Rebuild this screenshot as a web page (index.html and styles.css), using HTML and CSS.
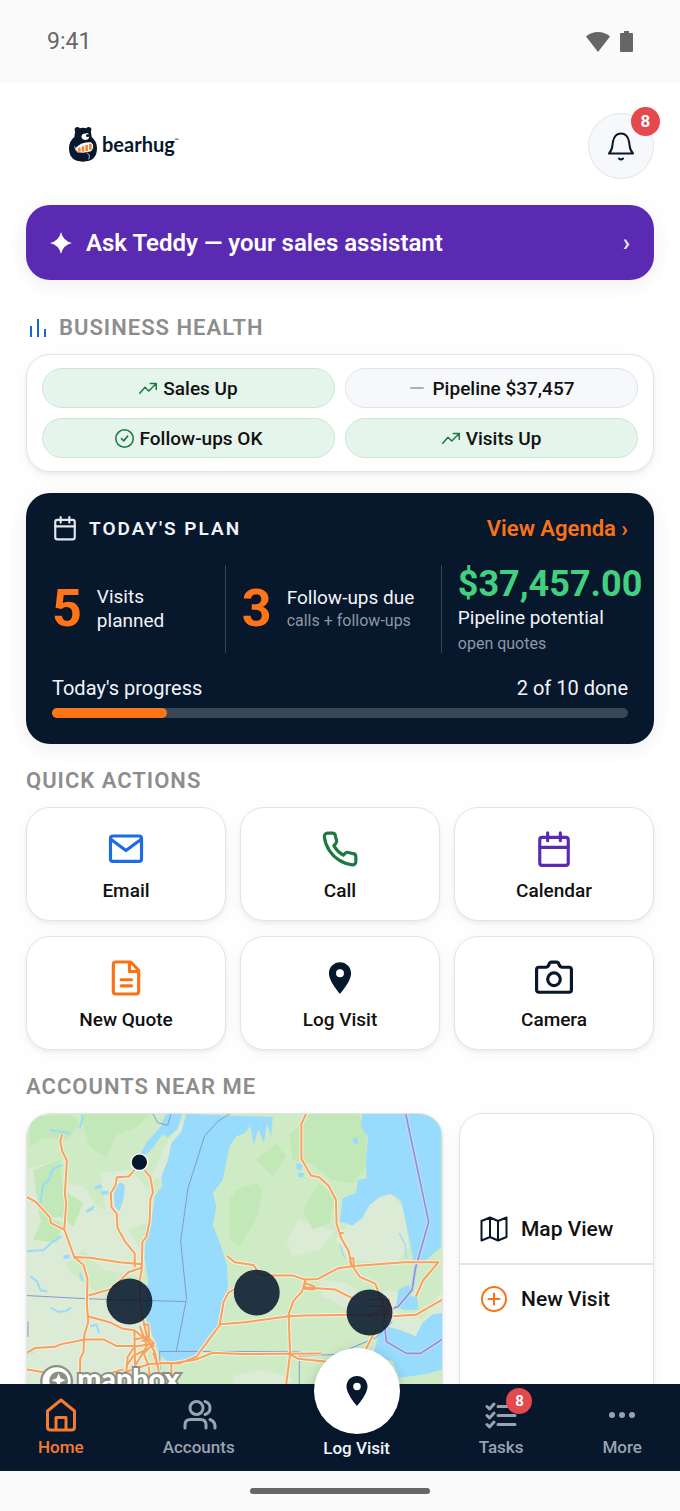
FILE: index.html
```html
<!DOCTYPE html>
<html lang="en">
<head>
    <meta charset="UTF-8">
    <meta name="viewport" content="width=device-width, initial-scale=1.0">
    <title>bearhug</title>
    <link rel="stylesheet" href="styles.css">
</head>
<body>
    <div class="app">
        <div class="status">
            <span>9:41</span>
            <div class="status_icons">
                <svg width="24" height="20" viewBox="0 0 24 20"><path d="M12 20 0 4.500Q5 0 12 0t12 4.500z"/></svg>
                <svg width="13" height="21" viewBox="0 0 13 21"><path d="M4 0h5v2h3q1 0 1 1v17q0 1-1 1H1q-1 0-1-1V3q0-1 1-1h3z"/></svg>
            </div>
        </div>

        <main>
            <header>
                <a class="logo" href="#">
                    <svg width="28" height="35" viewBox="0 0 84 105">
                        <circle cx="25" cy="8" r="8" fill="#07172c"/><circle cx="59" cy="8" r="8" fill="#07172c"/>
                        <path d="M21 8Q42-4 63 8q4 8 5 22 16 13 16 34 0 40-42 40T0 64q0-21 16-34 1-14 5-22z" fill="#07172c"/>
                        <path d="M37 28q3-10 12-8 9-5 11 5 3 12-10 14-12 0-13-11z" fill="#fff"/>
                        <ellipse cx="56" cy="26" rx="5" ry="4" fill="#07172c"/>
                        <path d="M19 64Q38 42 66 46l5 5q5 12-5 22-20 6-38 3-6-4-9-12z" fill="#fff"/>
                        <path d="M31 62v12M42 58v16M53 54v18M64 50v18" stroke="#f58634" stroke-width="8"/>
                        <path d="M17 58q0 12 12 20M54 78q11 5 5 19" fill="none" stroke="#b9c6d5" stroke-width="3"/>
                    </svg>
                    <span>bearhug<sup>™</sup></span>
                </a>
                <button class="bell" aria-label="Notifications">
                    <svg width="32" height="32" viewBox="0 0 32 32" class="line"><path d="M4 23.500h24c-4-4-3-7-4-12-1-5-4-8-8-8s-7 3-8 8c-1 5 0 8-4 12zM14 28.500q2 2 4 0"/></svg>
                    <span class="badge">8</span>
                </button>
            </header>

            <button class="ask">
                <svg width="22" height="22" viewBox="0 0 22 22"><path d="M11 0q2 9 11 11-9 2-11 11-2-9-11-11 9-2 11-11z" fill="#fff"/></svg>
                <span>Ask Teddy — your sales assistant</span>
                <span class="arrow">›</span>
            </button>

            <h2>
                <svg width="18" height="18" viewBox="0 0 18 18"><path d="M2 7v11M9 0v18M16 10v8" stroke="#1d63d8" stroke-width="2"/></svg>
                BUSINESS HEALTH
            </h2>
            <div class="card health">
                <div class="chip good"><svg width="18" height="18" viewBox="0 0 24 24" class="line"><path d="M1 19l7-8 5 5 9-9M15 6h8v8"/></svg>Sales Up</div>
                <div class="chip"><svg class="dash" width="18" height="18" viewBox="0 0 24 24"><path d="M3 12h18"/></svg>Pipeline $37,457</div>
                <div class="chip good"><svg width="19" height="19" viewBox="0 0 24 24" class="line"><circle cx="12" cy="12" r="11"/><path d="M8 12l3 3 5-6"/></svg>Follow-ups OK</div>
                <div class="chip good"><svg width="18" height="18" viewBox="0 0 24 24" class="line"><path d="M1 19l7-8 5 5 9-9M15 6h8v8"/></svg>Visits Up</div>
            </div>

            <section class="plan">
                <div class="plan_head">
                    <svg width="26" height="26" viewBox="0 0 24 24" class="line"><rect x="3" y="4.500" width="18" height="18" rx="2"/><path d="M3 10.500h18M8 2v5M16 2v5"/></svg>
                    <h3>TODAY'S PLAN</h3>
                    <a href="#">View Agenda ›</a>
                </div>
                <div class="stats">
                    <div class="stat"><b>5</b><p>Visits planned</p></div>
                    <div class="stat"><b>3</b><p>Follow-ups due<small>calls + follow-ups</small></p></div>
                    <div class="stat money"><b>$37,457.00</b><p>Pipeline potential<small>open quotes</small></p></div>
                </div>
                <div class="progress_text"><span>Today's progress</span><span>2 of 10 done</span></div>
                <div class="bar"><div style="width:20%"></div></div>
            </section>

            <h2>QUICK ACTIONS</h2>
            <div class="actions">
                <button class="card"><svg viewBox="0 0 24 24" class="line blue"><rect x="2.200" y="3.800" width="19.600" height="16" rx="1.500"/><path d="M2.600 6l9.400 7 9.400-7"/></svg>Email</button>
                <button class="card"><svg viewBox="0 0 24 24" class="line green"><path d="M22 17v3a2 2 0 0 1-2.200 2 19.800 19.800 0 0 1-8.600-3.100 19.500 19.500 0 0 1-6-6A19.800 19.800 0 0 1 2.100 4.200 2 2 0 0 1 4.100 2h3a2 2 0 0 1 2 1.700c.1 1 .4 1.900.7 2.800a2 2 0 0 1-.5 2.100L8.100 9.900a16 16 0 0 0 6 6l1.300-1.300a2 2 0 0 1 2.100-.4c.9.300 1.800.6 2.800.7A2 2 0 0 1 22 17z"/></svg>Call</button>
                <button class="card"><svg viewBox="0 0 24 24" class="line purple"><rect x="3" y="4.700" width="18" height="17.600" rx="1.500"/><path d="M3 11h18M8 1.800v5M16 1.800v5"/></svg>Calendar</button>
                <button class="card"><svg viewBox="0 0 24 24" class="line orange"><path d="M5.500 1.900h9.500l5 5.200v13.500q0 1.500-1.500 1.500h-13Q4 22.100 4 20.600V3.400q0-1.500 1.500-1.500zM14.200 2.300v5.600H20M9 13.100h6.500M9 17h6.500"/></svg>New Quote</button>
                <button class="card"><svg viewBox="0 0 24 24"><path d="M12 2C8.100 2 5 5.100 5 9c0 5.200 7 13 7 13s7-7.800 7-13c0-3.900-3.100-7-7-7zm0 9.500a2.500 2.500 0 1 1 0-5 2.500 2.500 0 0 1 0 5z" fill="#07172c"/></svg>Log Visit</button>
                <button class="card"><svg viewBox="0 0 24 24" class="line"><path d="M2.500 5.200h4.300q1.500 0 2-1.700.4-1.500 1.600-1.500h3.200q1.200 0 1.600 1.500.5 1.700 2 1.700h4.300q1.500 0 1.500 1.500v12.900q0 1.400-1.500 1.400h-19Q1 21 1 19.600V6.700q0-1.500 1.500-1.500z"/><circle cx="12" cy="12.800" r="4"/></svg>Camera</button>
            </div>

            <h2>ACCOUNTS NEAR ME</h2>
            <div class="near">
                <div class="card map">
                    <svg viewBox="81 162 1248 900" preserveAspectRatio="xMinYMin slice" role="img" aria-label="Map of accounts near me">
                        <rect x="81" y="162" width="1248" height="900" fill="#cfebc6"/>
                        <!-- open land -->
                        <g fill="#dcebd5">
                            <path d="M81 330l60-20 60 60 50 10 40 60 60 20 60 90 30 60-20 40-110-20-60-60-60 50-110-30zM81 560l90-10 40 90 110 80 80 30 50 80-20 200-350 30zM300 340l90-10 60 60-10 100-60 20-60-50zM500 250l50-70 15 10-40 70-40 100-30-10z"/>
                            <path d="M900 480l-40 60 20 50 80-20 50-60-60-10zM1040 500l70-70 60-30 40 40 20 120-40 50-140-10-40-60zM1090 720l80-30 50 20-30 50 80 20 60-90 40-80v180l-60 10-30 50-70-10zM960 660l80 10 60 50-50 30-80-40zM700 950l90-20 90 30-20 60-160 10z"/>
                        </g>
                        <!-- forest -->
                        <g fill="#c1e8b6">
                            <path d="M90 170l120-8 30 30-40 50-70-10-40 30zM240 162h210l-40 40-60 20-30 70-50-30zM100 330l80-30 10 90 60 40-30 70-40-30-60 10zM130 470l60 20-20 60-70-10z"/>
                            <path d="M930 162h150l20 60v100l-40 50-60-10-60-50-60-10-10-80 50-40zM690 420l20-30 60-20 20 20-20 90-50 80-30-20zM770 300l60-50 30 40-40 60zM910 450l50-80 50 40-20 80-50 20z"/>
                        </g>
                        <!-- lakes -->
                        <g fill="#98dbfd">
                            <path d="M560 162l-15 53-30 35-10 50-20 50 2 30-22 30-3 30-12 60-13 50-2 50 10 60-5 60v60l15 40 13 30 12 35 20 20h40l50-15 30-30 30-40 20-50 15-90-2-60-18-60-25-65 10-55-10-40 30-40 12-60 8-40 20-30 25-10 18-22 10 58 14-50 16 45 10-60 12 40 5-60z"/>
                            <path d="M418 290l22-42 42-46 16-40h50l-14 45-30 25-16-8-30 42-25 22z"/>
                            <path d="M350 376l12-8 13 8-3 38-13 40-14-12-3-38zM283 380l22-6 4 10-22 4zM300 395l26-2v10l-20 2zM258 452l26-16-4 14-20 10zM190 588l18-4 2 12-18 2z"/>
                            <path d="M1090 162l-5 38 20 30v20l-5 60 3 45-27 5-6 40-40 15-8 70 38 12 30-22 20-38 30-25 35-10 30 20 15 60 15 80 8 45 37-5 46-40V162zM890 310l20 4-4 18-14-4zM895 338l20 2-4 14-14-4zM1060 236l14-4 4 18-14 2z"/>
                            <path d="M1200 690l30-16 5 36 20 2 2 38-37 2-30-12zM1120 890l20-70 20-20 40 10 50 20 20-40 30-25 30-5v170l-50 15-80 10-20-50z"/>
                        </g>
                        <!-- rivers -->
                        <g fill="none" stroke="#98dbfd" stroke-width="6" stroke-linejoin="round">
                            <path d="M188 314l-30 14-10 30-20 20-6 52M81 575l50-4 26-24 28-18M90 650l20 14 12 28 20 4M152 745l24 12 22-2 16-12M270 800l20-4 8 26M240 640l8 24M81 885l20-10M240 205l10-40M150 210l60 10"/>
                            <path d="M1200 520l18 34 4 42M1022 555l14 40M1090 1000l50-10" stroke-width="4"/>
                        </g>
                        <!-- state borders -->
                        <g fill="none" stroke="#8797d3" stroke-width="3">
                            <path d="M81 708l190 10 288 8 2-6-18-176 22-158 50-158 40-44 40-26M460 162l14 26 30 8 10-34M559 726l-29 150M480 876h420v104M480 876l2 100M900 890l110-5 120-50 50-48M84 786v46"/>
                            <path d="M1220 162l69 325-40 140-10 64-42 50-45 16 10 90 60 35h42l65-42" stroke="#cbd7f7" stroke-width="12"/>
                            <path d="M1220 162l69 325-40 140-10 64-42 50-45 16 10 90 60 35h42l65-42" stroke-width="5"/>
                        </g>
                        <!-- highways, drawn as casing and then line -->
                        <defs>
                            <g id="roads" fill="none" stroke-linejoin="round">
                                <path d="M187 224l-6 20 6 30 14 28-6 100 4 30-6 76 30 84 28 24 12 42-2 72 4 58-12 40-2 50-10 20-2 110"/>
                                <path d="M81 412l26 14 42 46 4 18 40 20M220 592l50 2 90 14 68 6M266 708l70-20 50-50 40-14M264 770l70 20 36 18 34 4M81 880l24-14 60-4 20-8 70-14h56l40 20h50"/>
                                <path d="M405 330l-18 20-36 2-4 26-14 22 2 42 16 20 2 42 22 40 30 38v40M434 330l18 22 8 46-8 20-2 66-10 48-12 14-2 84-6 30v60l10 60 14 60 22 40 12 60"/>
                                <path d="M404 812l2 110M404 812l60 50M420 800l22 60-36 60M404 840l40-8 18 20-30 30 14 34M404 862l60-10M380 920l20-30 40-20M370 940l80-26 80-4 60-10 50-20 86 4 240-2M430 795h16l2 40-22 10M376 972l8-80 20-30M450 972l-2-50M515 972v-60M480 910l60 2 50-20 40-54 30-40 12-70 14-28 24-14M81 930l60 10M460 880l12 32M370 930l-60 18"/>
                                <path d="M658 794l80-6 130-18 54-2 250-4M682 588l24 20 56 8 20 30 40 2h60l34 12 40-2 60-32 60-8 140-10h102l-46 54-22 50"/>
                                <path d="M920 162l-14 30v104l20 36 10 16 24 4 28 26 22 42 2 72 14 44 22 38 8 40 26 38 46 20 24 62"/>
                                <path d="M1023 520h10M1055 620l-2-24h10v28M918 662l-10 34-26 28-14 40 4 120-14 110M918 684l90 6 60 30M915 670l30 10v10l-28-2zM866 882l30 16 120 12M1180 770l70-4 80-46M1130 810l-40 80M1180 1010l100-2 48-28M1100 720h70l-20 80M1105 740h50v50M1110 770l40-20M1160 720l20 30"/>
                            </g>
                        </defs>
                        <use href="#roads" stroke="#f8efdc" stroke-width="12"/>
                        <use href="#roads" stroke="#f5a25f" stroke-width="6"/>
                        <g fill="#07172c">
                            <g fill-opacity=".87"><circle cx="389" cy="726" r="69"/><circle cx="772" cy="699" r="69"/><circle cx="1111" cy="759" r="69"/></g>
                            <circle cx="419" cy="307" r="25" stroke="#fff" stroke-width="4"/>
                        </g>
                        <circle cx="170" cy="966" r="46" fill="#fff" stroke="#8b9084" stroke-width="7"/>
                        <circle cx="176" cy="964" r="28" fill="#8b9084"/><path d="M176 942l6 15 15 6-15 6-6 15-6-15-15-6 15-6z" fill="#fff"/>
                        <text class="mapbox" x="232" y="990">mapbox</text>
                    </svg>
                </div>
                <div class="card side">
                    <a href="#"><svg width="28" height="28" viewBox="0 0 28 28" class="line"><path d="M1.500 6L10 2.500l8 3.500 8.500-3.500V22L18 25.500 10 22l-8.500 3.500zM10 2.500V22M18 6v19.500"/></svg>Map View</a>
                    <a href="#"><svg width="28" height="28" viewBox="0 0 28 28" class="line orange"><circle cx="14" cy="14" r="12"/><path d="M14 8.500v11M8.500 14h11"/></svg>New Visit</a>
                </div>
            </div>
        </main>

        <nav>
            <a href="#" class="on"><svg viewBox="0 0 36 36" class="line"><path d="M4.500 14L18 3l13.500 11v16q0 3-3 3h-21q-3 0-3-3zM13 33V20.500h10V33"/></svg>Home</a>
            <a href="#"><svg viewBox="0 0 36 36" class="line"><circle cx="15.500" cy="11" r="6.500"/><path d="M4 31v-3q0-5.500 5.500-5.500h10q5.500 0 5.500 5.500v3M24 4.500q5 1.500 5 6.500t-5 6.500M29 22.500q5 2 5 7v1.500"/></svg>Accounts</a>
            <a href="#" class="log"><span class="fab"><svg viewBox="0 0 24 24"><path d="M12 2C8.100 2 5 5.100 5 9c0 5.200 7 13 7 13s7-7.800 7-13c0-3.900-3.100-7-7-7zm0 9.500a2.500 2.500 0 1 1 0-5 2.500 2.500 0 0 1 0 5z" fill="#07172c"/></svg></span>Log Visit</a>
            <a href="#"><svg viewBox="0 0 36 36" class="line"><path d="M4 9.500l2.500 2.500L11 7M4 18.500l2.500 2.500 4.500-5M4 27.500l2.500 2.500 4.500-5M15 9.500h17M15 18.500h17M15 27.500h17"/></svg>Tasks<span class="badge">8</span></a>
            <a href="#"><svg viewBox="0 0 36 36" fill="currentColor"><circle cx="8" cy="18" r="3"/><circle cx="18" cy="18" r="3"/><circle cx="28" cy="18" r="3"/></svg>More</a>
        </nav>
        <div class="handle"><div></div></div>
    </div>
</body>
</html>
```
FILE: styles.css
```css
* {box-sizing:border-box;}
body {margin:0; background:#fff; color:#111; font-family:Roboto, "Liberation Sans", sans-serif;}
h2, h3, p {margin:0;}
a {color:inherit; text-decoration:none;}
button {padding:0; border:0; font:inherit; color:inherit; cursor:pointer;}
svg {display:block; flex-shrink:0;}

.app {display:flex; flex-direction:column; height:100vh; overflow:hidden;}
.line {fill:none; stroke:#07172c; stroke-width:2; stroke-linecap:round; stroke-linejoin:round;}
.blue {stroke:#1d6be5;}
.green {stroke:#1b7a43;}
.purple {stroke:#5b2ab2;}
.orange {stroke:#f97316;}

.status {flex:none; display:flex; justify-content:space-between; align-items:center; height:83px; padding:0 47px; background:#fafafa; color:#666; font-size:23px;}
.status_icons {display:flex; align-items:center; gap:10px; fill:#666;}

main {flex:1; min-height:0; padding:30px 26px 0; overflow:hidden;}
header {display:flex; justify-content:space-between; align-items:center; margin-bottom:26px;}
.logo {display:flex; align-items:center; gap:5px; margin:0 0 4px 43px; color:#07172c; font:700 20px Lato, sans-serif;}
.logo sup {font-size:5px; vertical-align:10px;}
.bell {position:relative; display:flex; align-items:center; justify-content:center; width:66px; height:66px; border:1px solid #e2e4e8; border-radius:50%; background:#f6f8fb;}
.badge {position:absolute; top:-7px; right:-7px; width:29px; height:29px; border-radius:50%; background:#e5484d; color:#fff; font-size:17px; font-weight:700; line-height:29px; text-align:center;}

.card {border:1px solid #e2e4e8; border-radius:24px; background:#fff; box-shadow:0 2px 4px rgba(7,23,44,.06), 0 4px 20px rgba(7,23,44,.04);}
.ask {display:flex; align-items:center; gap:14px; width:100%; height:75px; padding:0 24px; border-radius:24px; background:#5b2ab2; color:#fff; font-size:24px; font-weight:600; box-shadow:0 4px 20px rgba(7,23,44,.08);}
.arrow {margin-left:auto; opacity:.9;}
h2 {display:flex; align-items:center; gap:12px; margin:22px 0 11px; color:#8d8d8d; font-size:22px; font-weight:600; line-height:30px; letter-spacing:1px;}
.ask + h2 {margin-top:33px; padding-left:3px;}

.health {display:grid; grid-template-columns:1fr 1fr; gap:10px; padding:13px 15px; margin-bottom:21px;}
.chip {display:flex; align-items:center; justify-content:center; gap:6px; height:40px; border:1px solid #e0e3e8; border-radius:20px; background:#f6f8fb; font-size:19px; font-weight:500;}
.chip .line {stroke:#1b7a43;}
.good {border-color:#cde6d7; background:#e5f5eb;}
.dash {stroke:#999; stroke-width:2;}

.plan {padding:21px 26px 26px; border-radius:24px; background:#07172c; color:#f1f4f8; box-shadow:0 4px 20px rgba(7,23,44,.08);}
.plan_head {display:flex; align-items:center; gap:11px; height:28px; margin-bottom:23px;}
.plan_head .line {stroke:#e4e8ee;}
.plan_head h3 {font-size:19px; font-weight:600; letter-spacing:2px;}
.plan_head a {margin-left:auto; color:#f97316; font-size:22px; font-weight:600;}
.stats {display:grid; grid-template-columns:minmax(0,12fr) minmax(0,15fr) minmax(0,13fr); grid-template-rows:88px; margin-bottom:21px;}
.stat {display:flex; align-items:center; gap:15px; font-size:19px; line-height:24px;}
.stat + .stat {padding-left:16px; border-left:1px solid #36445a;}
.stat b {color:#ff7417; font-size:52px; line-height:52px;}
.stat small {display:block; color:#8d97a5; font-size:16px; line-height:22px;}
.stat:first-child p {width:80px;}
.stat:nth-child(2) p {white-space:nowrap;}
.money {flex-direction:column; align-items:flex-start; justify-content:center; gap:0;}
.money b {color:#43cf80; font-size:36px; line-height:44px;}
.money small {line-height:27px;}
.progress_text {display:flex; justify-content:space-between; margin-bottom:6px; font-size:20px; line-height:28px;}
.bar {height:10px; border-radius:5px; background:#3a4656;}
.bar div {height:100%; border-radius:5px; background:#ff7417;}

.actions {display:grid; grid-template-columns:repeat(3,1fr); gap:15px 14px;}
.actions .card {display:flex; flex-direction:column; align-items:center; gap:11px; height:114px; padding-top:22px; font-size:19px; font-weight:500; line-height:24px;}
.actions svg {width:38px; height:38px;}

.near {display:grid; grid-template-columns:1fr 195px; gap:16px; height:300px;}
.map {overflow:hidden;}
.map svg {width:100%; height:100%;}
.mapbox {font:900 86px Lato, sans-serif; fill:#fff; stroke:#8b9084; stroke-width:12; paint-order:stroke;}
.side {display:flex; flex-direction:column; justify-content:center; overflow:hidden;}
.side a {display:flex; align-items:center; gap:13px; height:69px; padding-left:20px; font-size:21px; font-weight:500;}
.side a + a {border-top:2px solid #e2e4e8;}

nav {flex:none; position:relative; display:flex; justify-content:space-between; height:87px; padding:0 38px; background:#07172c; color:#9aa3af; font-size:17px; font-weight:500; line-height:22px;}
nav a {position:relative; display:flex; flex-direction:column; align-items:center; gap:3px; padding-top:13px;}
nav svg {width:36px; height:36px;}
nav .line {stroke:currentColor; stroke-width:3;}
nav .on {color:#f47c30;}
nav .badge {top:4px; right:-9px; width:26px; height:26px; font-size:15px; line-height:26px;}
.log {padding:0; color:#f1f4f8;}
.fab {display:flex; align-items:center; justify-content:center; width:86px; height:86px; margin-top:-36px; border-radius:50%; background:#fff; box-shadow:0 4px 12px rgba(7,23,44,.25);}
.handle {flex:none; display:flex; justify-content:center; align-items:center; height:40px; background:#fafafa;}
.handle div {width:180px; height:6px; border-radius:3px; background:#666;}
```
